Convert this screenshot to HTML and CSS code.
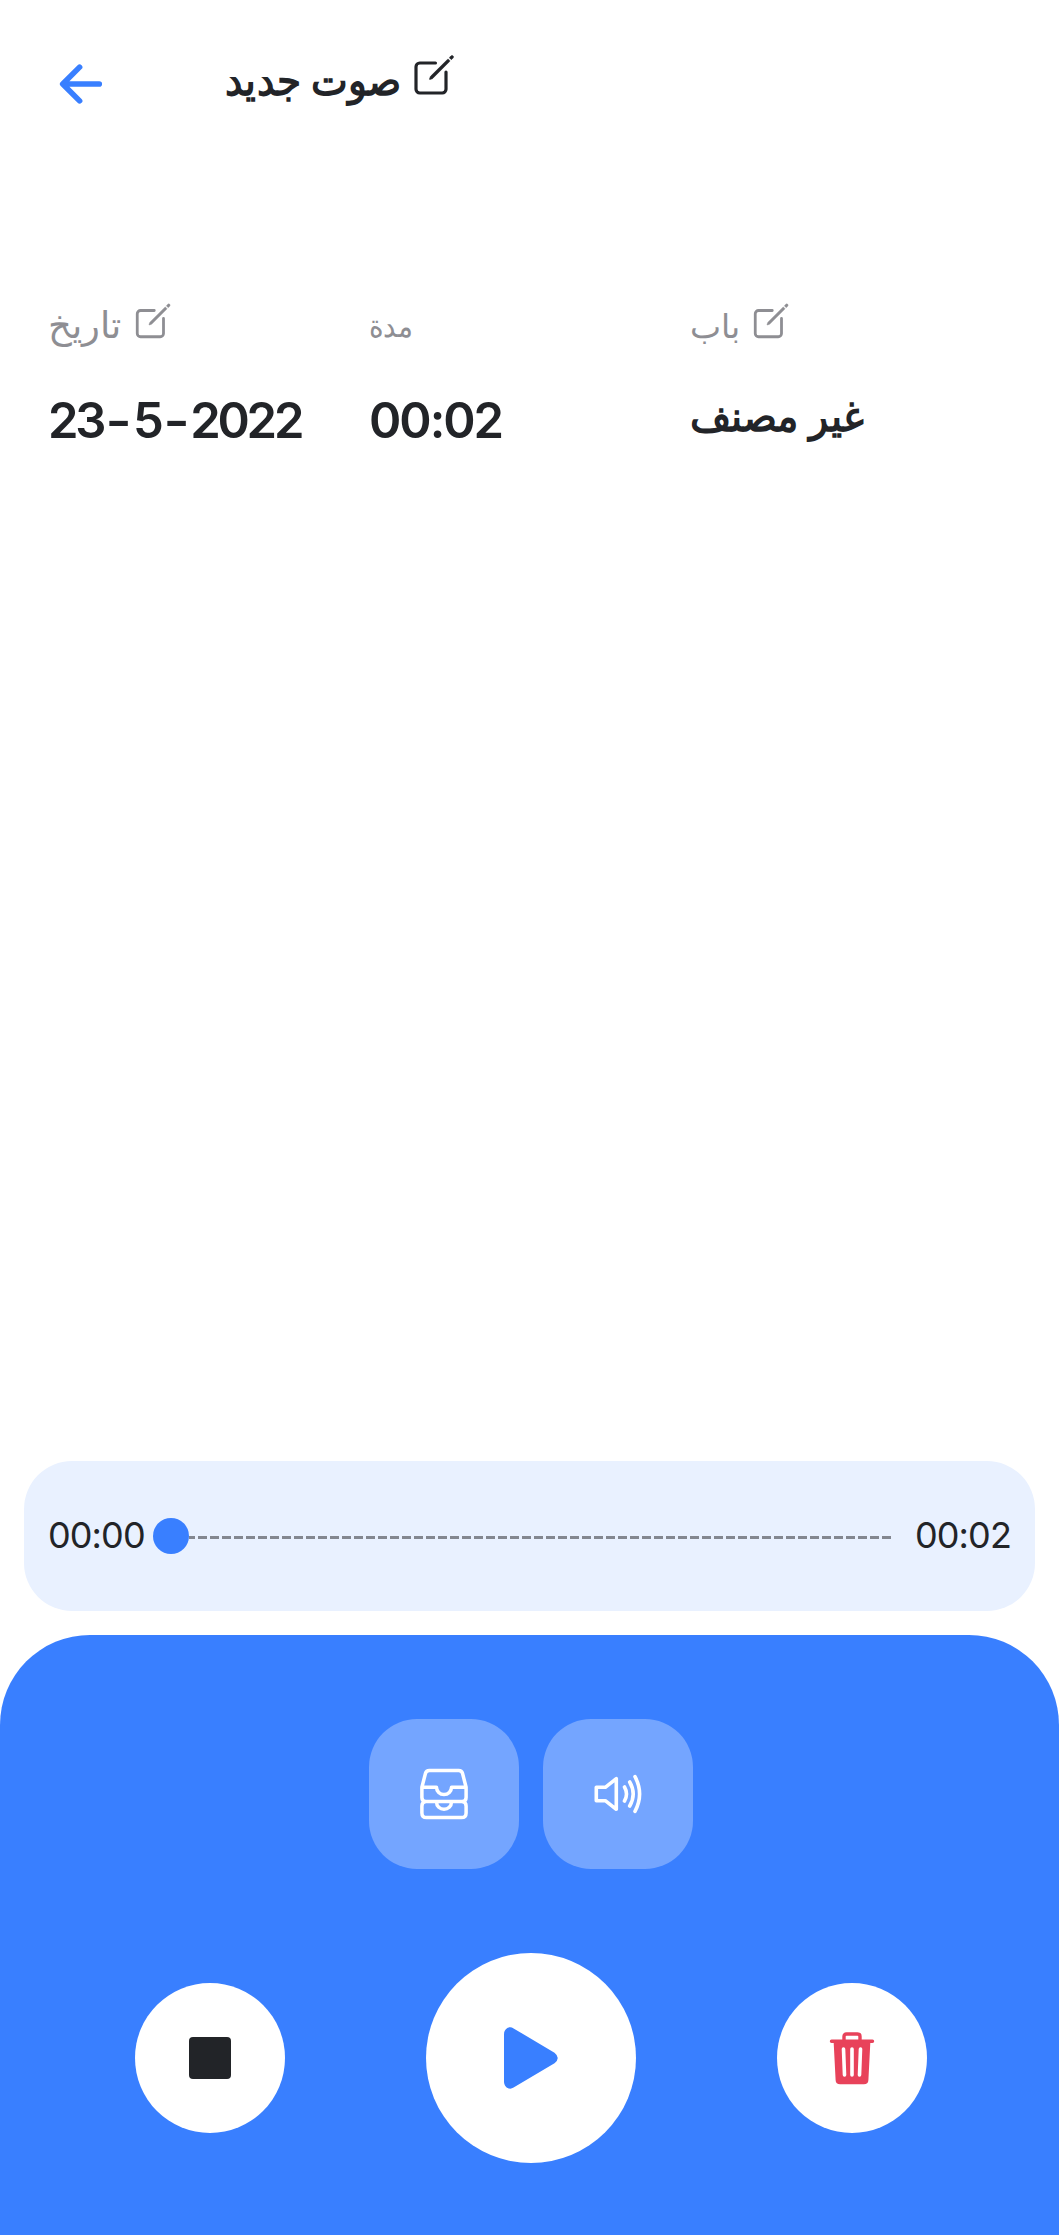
FILE: index.html
```
<!DOCTYPE html>
<html lang="ar">
<head>
<meta charset="utf-8">
<title>صوت جديد</title>
<link rel="stylesheet" href="styles.css">
</head>
<body>
<svg class="defs" width="0" height="0" aria-hidden="true">
  <symbol id="edit" viewBox="0 0 512 512">
    <path d="M384 224v184a40 40 0 01-40 40H104a40 40 0 01-40-40V168a40 40 0 0140-40h167.48" fill="none" stroke="currentColor" stroke-width="34" stroke-linecap="round" stroke-linejoin="round"/>
    <path fill="currentColor" stroke="currentColor" stroke-width="6" d="M459.94 53.25a16.06 16.06 0 00-23.22-.56L424.35 65a8 8 0 000 11.31l11.34 11.32a8 8 0 0011.34 0l12.06-12c6.1-6.09 6.67-16.01.85-22.38zM399.34 90L218.82 270.2a9 9 0 00-2.31 3.93L208.16 299a3.91 3.91 0 004.86 4.86l24.85-8.35a9 9 0 003.93-2.31L422 112.66a9 9 0 000-12.66l-9.95-10a9 9 0 00-12.71 0z"/>
  </symbol>
</svg>
<div class="screen">
  <header class="header">
    <svg class="back" viewBox="0 0 512 512" fill="none" stroke="currentColor" stroke-width="48" stroke-linecap="round" stroke-linejoin="round"><path d="M244 400L100 256l144-144M120 256h292"/></svg>
    <h1 class="title"><span class="title-text">صوت جديد</span><svg class="title-icon"><use href="#edit"/></svg></h1>
  </header>
  <section class="details">
    <div class="detail">
      <div class="label"><span class="w-date">تاريخ</span><svg class="label-icon"><use href="#edit"/></svg></div>
      <div class="value date">23<span class="dash">-</span>5<span class="dash">-</span>2022</div>
    </div>
    <div class="detail">
      <div class="label"><span class="w-length">مدة</span></div>
      <div class="value length">00:02</div>
    </div>
    <div class="detail">
      <div class="label"><span class="w-cat">باب</span><svg class="label-icon"><use href="#edit"/></svg></div>
      <div class="value category">غير مصنف</div>
    </div>
  </section>
  <section class="progress">
    <span class="time">00:00</span>
    <span class="thumb"></span>
    <span class="track"></span>
    <span class="time">00:02</span>
  </section>
  <section class="player">
    <div class="options">
      <button class="option"><svg width="54" height="54" viewBox="0 0 54 54" fill="none" stroke="currentColor" stroke-width="3.5" stroke-linecap="round" stroke-linejoin="round"><path d="M4.9 20.2 8.5 6.3q.8-2.9 3.8-2.9h29.4q3 0 3.8 2.9l3.6 13.9v10.3q0 4-4 4H8.9q-4 0-4-4zM4.9 20.3H19.5a7.5 7.2 0 0015 0h14.6M8.9 34.5q-4 .5-4 4.500v7q0 4.600 4.600 4.600h35q4.600 0 4.600-4.600v-7q0-4-4-4.500M19.600 35.500a7.400 6.800 0 0014.800 0"/></svg></button>
      <button class="option"><svg width="54" height="54" viewBox="0 0 54 54" fill="none" stroke="currentColor" stroke-width="3.6" stroke-linecap="round" stroke-linejoin="round"><path d="M5.300 20.300h9L25.300 11.700v30.600L14.300 33.700h-9zM33.500 20q4 7 0 14M38.700 15q7 12 0 24M44 9.700q9.200 17.300 0 34.600"/></svg></button>
    </div>
    <div class="controls">
      <button class="round"><span class="stop"></span></button>
      <button class="round play"><svg width="54" height="62" viewBox="0 0 54 62"><path fill="currentColor" d="M0 7.500V54.500C0 60 5 63.500 9.600 60.600L50.500 36.200Q57 31 50.500 25.800L9.600 1.400C5-1.500 0 2 0 7.500Z"/></svg></button>
      <button class="round trash"><svg width="46" height="54" viewBox="0 0 46 54"><path fill="none" stroke="currentColor" stroke-width="3.400" stroke-linecap="round" stroke-linejoin="round" d="M2.500 10.200h41M15 9V5.500q0-2.500 2.500-2.500h11q2.500 0 2.500 2.500V9"/><path fill="currentColor" d="M4.600 10h36.800L39.400 49q-.2 4.300-4.500 4.300H11.100Q6.800 53.300 6.600 49z"/><path fill="none" stroke="#fff" stroke-width="3.600" stroke-linecap="round" d="M14.500 18l1 26M23 18v26M31.500 18l-1 26"/></svg></button>
    </div>
  </section>
</div>
</body>
</html>
```
FILE: styles.css
```
* { box-sizing: border-box; }
body {
  margin: 0;
  background: #fff;
  color: #222428;
  font-family: Inter, "Liberation Sans", sans-serif;
}
button { border: 0; padding: 0; font: inherit; }
svg { display: block; flex: none; }
.defs { position: absolute; }
.screen {
  width: 1059px;
  height: 2235px;
  display: flex;
  flex-direction: column;
  overflow: hidden;
}
.header {
  height: 168px;
  padding: 0 51px;
  display: flex;
  align-items: center;
}
.back { width: 60px; height: 60px; color: #397fff; }
.title {
  margin: 0 0 0 114px;
  display: flex;
  align-items: center;
  gap: 11px;
  height: 66px;
  font-size: 42px;
  line-height: 57px;
  font-weight: 700;
  white-space: nowrap;
}
.title-text {
  width: 174px;
  height: 66px;
  transform: scaleX(0.93);
  transform-origin: left;
}
.title-icon { width: 48px; height: 48px; margin-top: -19px; }
.details {
  display: grid;
  grid-template-columns: 321px 321px 1fr;
  padding: 132px 48px 0;
}
.label {
  display: flex;
  gap: 10px;
  height: 60px;
  color: #8e8e93;
  font-size: 36px;
  line-height: 52px;
  white-space: nowrap;
}
.w-date { width: 74px; font-size: 37px; line-height: 50px; }
.w-length {
  font-size: 31px;
  transform: scaleX(0.9);
  transform-origin: left;
}
.w-cat { width: 50px; font-size: 33px; }
.label-icon { width: 42px; height: 42px; }
.value {
  height: 80px;
  padding-top: 31px;
  font-size: 49px;
  line-height: 60px;
  font-weight: 600;
  letter-spacing: -2px;
  white-space: nowrap;
}
.date { letter-spacing: -3.2px; }
.dash {
  display: inline-block;
  margin: 0 6px 0 4px;
  transform: scaleX(1.15);
}
.category {
  padding-top: 26px;
  font-size: 42px;
  font-weight: 700;
  letter-spacing: 0;
  transform: scaleX(0.95);
  transform-origin: left;
}
.progress {
  margin: auto 24px 24px;
  height: 150px;
  border-radius: 48px;
  background: #e9f1ff;
  padding: 0 24px;
  display: flex;
  align-items: center;
}
.time {
  width: 96px;
  margin-top: -2px;
  font-size: 36px;
  line-height: 54px;
  letter-spacing: -0.9px;
  white-space: nowrap;
}
.thumb {
  width: 36px;
  height: 36px;
  margin-left: 9px;
  border-radius: 50%;
  background: #397fff;
}
.track {
  flex: 1;
  height: 3px;
  margin: 3px 24px 0 0;
  background: repeating-linear-gradient(90deg, #838790 0 6px, transparent 6px 9px, #838790 9px 12px);
}
.player {
  height: 600px;
  padding-top: 84px;
  border-radius: 90px 90px 0 0;
  background: #397fff;
}
.options { display: flex; justify-content: center; gap: 24px; padding-left: 3px; }
.option {
  width: 150px;
  height: 150px;
  border-radius: 48px;
  background: #74a5ff;
  color: #fff;
  display: grid;
  place-items: center;
}
.controls {
  margin-top: 84px;
  padding: 0 132px 0 135px;
  display: flex;
  justify-content: space-between;
  align-items: center;
}
.round {
  width: 150px;
  height: 150px;
  border-radius: 50%;
  background: #fff;
  display: grid;
  place-items: center;
}
.play { width: 210px; height: 210px; color: #397fff; }
.trash { color: #e8425a; }
.stop { width: 42px; height: 42px; border-radius: 4px; background: #222428; }
```
